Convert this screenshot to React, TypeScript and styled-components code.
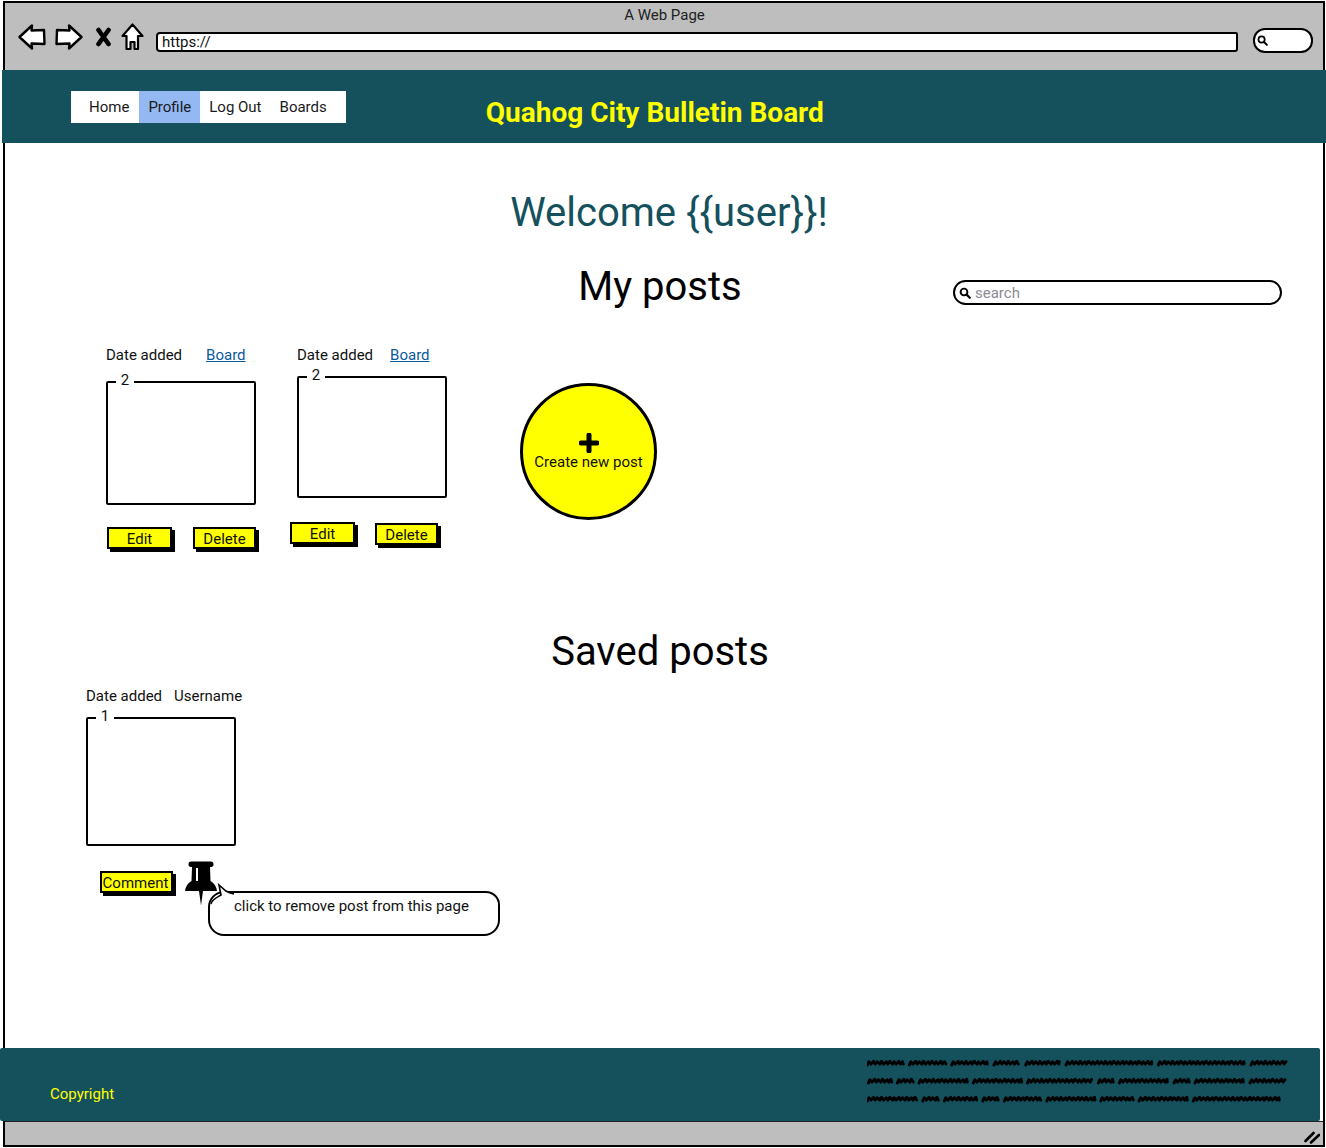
import React from "react";
import styled, { createGlobalStyle } from "styled-components";

const TEAL = "#15505d";
const YELLOW = "#ffff00";
const GREY = "#bebebe";

const Global = createGlobalStyle`
  html, body { margin: 0; padding: 0; background: #fff; }
  body { font-family: Roboto, "Liberation Sans", sans-serif; font-size: 15px; color: #111; }
  * { box-sizing: border-box; }
`;

const Window = styled.div`
  margin: 1px 1px 1px 3px;
  height: 1146px;
  border: 2px solid #000;
  background: #fff;
  display: flex;
  flex-direction: column;
`;

const TitleBar = styled.div`
  height: 67px;
  flex: none;
  background: ${GREY};
  padding-left: 13px;
`;

const WindowTitle = styled.div`
  height: 20px;
  padding: 3px 12px 0 0;
  line-height: 18px;
  font-size: 15px;
  text-align: center;
  color: #222;
`;

const Toolbar = styled.div`
  height: 28px;
  display: flex;
  align-items: center;
`;

const ToolIcon = styled.svg<{ $after: number }>`
  flex: none;
  margin-right: ${(p) => p.$after}px;
  display: block;
`;

const UrlBar = styled.div`
  width: 1082px;
  height: 20px;
  margin-top: 10px;
  border: 2.5px solid #000;
  border-radius: 4px 2px 3px 4px;
  background: #fff;
  padding-left: 4px;
  line-height: 16px;
  font-size: 15px;
  color: #111;
  white-space: nowrap;
`;

const BrowserSearch = styled.div`
  width: 60px;
  height: 25px;
  margin-left: 15px;
  margin-top: 7px;
  border: 2.5px solid #000;
  border-radius: 12px;
  background: #fff;
  padding-left: 2px;
  display: flex;
  align-items: center;
`;

const Header = styled.header`
  height: 73px;
  margin: 0 -3px 0 -3px;
  background: ${TEAL};
  display: flex;
  align-items: flex-start;
  flex: none;
`;

const Nav = styled.nav`
  margin: 21px 0 0 69px;
  height: 32px;
  background: #fff;
  padding: 0 10px 0 9px;
  display: flex;
`;

const NavItem = styled.a<{ $active?: boolean; $extra?: number }>`
  padding: 0 ${(p) => 9 + (p.$extra ?? 0)}px 0 9px;
  line-height: 32px;
  font-size: 15px;
  color: #1a1a1a;
  background: ${(p) => (p.$active ? "#93b8f2" : "transparent")};
`;

const SiteTitle = styled.div`
  margin: 25px 0 0 140px;
  line-height: 36px;
  font-size: 28px;
  font-weight: 700;
  color: ${YELLOW};
  white-space: nowrap;
`;

const Main = styled.main`
  flex: 1;
  padding: 46px 8px 0 0;
`;

const Welcome = styled.h1`
  margin: 0;
  padding-left: 18px;
  text-align: center;
  font-size: 40px;
  line-height: 48px;
  font-weight: 400;
  color: ${TEAL};
`;

const SectionHeading = styled.h2`
  margin: 0;
  text-align: center;
  font-size: 40px;
  line-height: 48px;
  font-weight: 400;
  color: #000;
`;

const MyPostsHeading = styled(SectionHeading)`
  grid-column: 2;
`;

const MyPostsHead = styled.div`
  margin-top: 26px;
  display: grid;
  grid-template-columns: 1fr auto 1fr;
  align-items: center;
`;

const SearchBox = styled.div`
  grid-column: 3;
  justify-self: end;
  width: 329px;
  height: 25px;
  margin-right: 33px;
  margin-top: 11px;
  border: 2px solid #000;
  border-radius: 13px;
  display: flex;
  align-items: center;
  gap: 4px;
  padding-left: 4px;
  color: #8a8a94;
  font-size: 15px;
`;

const PostsRow = styled.div`
  margin: 35px 0 0 101px;
  display: flex;
  align-items: flex-start;
`;

const Card = styled.article<{ $width: number }>`
  width: ${(p) => p.$width}px;
  flex: none;
`;

const Meta = styled.div<{ $gap: number }>`
  display: flex;
  gap: ${(p) => p.$gap}px;
  line-height: 18px;
  font-size: 15px;
  white-space: nowrap;
`;

const BoardLink = styled.a`
  color: #0b5a9c;
  text-decoration: underline;
`;

const NoteBox = styled.div<{ $top: number; $height: number }>`
  position: relative;
  width: 150px;
  height: ${(p) => p.$height}px;
  margin-top: ${(p) => p.$top}px;
  border: 2.5px solid #000;
  border-radius: 2px;
`;

const NoteCount = styled.span`
  position: absolute;
  left: 8px;
  top: -12px;
  width: 18px;
  background: #fff;
  text-align: center;
  line-height: 18px;
  font-size: 15px;
`;

const CardActions = styled.div<{ $top: number; $left: number; $gap: number }>`
  margin-top: ${(p) => p.$top}px;
  margin-left: ${(p) => p.$left}px;
  display: flex;
  align-items: flex-start;
  gap: ${(p) => p.$gap}px;
`;

const ActionButton = styled.button<{ $width: number; $shift?: number }>`
  width: ${(p) => p.$width}px;
  height: 22px;
  margin-top: ${(p) => p.$shift ?? 0}px;
  padding: 1px 0 0;
  border: 2px solid #000;
  background: ${YELLOW};
  box-shadow: 3px 3px 0 #000;
  font-family: inherit;
  font-size: 15px;
  line-height: 18px;
  color: #111;
`;

const CreateCircle = styled.button`
  flex: none;
  width: 137px;
  height: 137px;
  margin-top: 37px;
  padding: 47px 0 0;
  border: 3px solid #000;
  border-radius: 50%;
  background: ${YELLOW};
  display: flex;
  flex-direction: column;
  align-items: center;
  font-family: inherit;
  font-size: 15px;
  line-height: 18px;
  color: #111;
`;

const CreateLabel = styled.span`
  white-space: nowrap;
`;

const SavedHeading = styled(SectionHeading)`
  margin-top: 79px;
`;

const SavedRow = styled.section`
  margin: 11px 0 0 81px;
`;

const SavedActions = styled.div`
  margin-top: 15px;
  display: flex;
  align-items: flex-start;
`;

const CommentButton = styled(ActionButton)`
  margin: 10px 12px 0 14px;
  padding: 1px 2px 0 0;
`;

const Bubble = styled.div`
  position: relative;
  width: 292px;
  height: 45px;
  margin: 30px 0 0 -9px;
  border: 2px solid #000;
  border-radius: 16px 14px 16px 16px;
  background: #fff;
  padding: 4px 0 0 24px;
  line-height: 18px;
  font-size: 15px;
  white-space: nowrap;
`;

const BubbleTail = styled.svg`
  position: absolute;
  left: -2px;
  top: -10px;
`;

const Footer = styled.footer`
  height: 73px;
  flex: none;
  margin: 0 3px 0 -5px;
  background: ${TEAL};
  border-radius: 2px;
  display: flex;
  justify-content: space-between;
  align-items: flex-start;
  padding: 8px 31px 0 50px;
`;

const Copyright = styled.div`
  margin-top: 29px;
  line-height: 18px;
  font-size: 15px;
  color: ${YELLOW};
`;

const StatusBar = styled.div`
  height: 24px;
  flex: none;
  background: ${GREY};
  border-top: 1px solid #222;
  display: flex;
  justify-content: flex-end;
  align-items: flex-end;
  padding: 0 3px 1px 0;
`;

const PlusMark = styled.svg`
  flex: none;
`;

const Back = () => (
  <ToolIcon $after={9} width="28" height="26" viewBox="0 0 28 26">
    <path d="M1.5 13 L14 1.5 L13.5 6.5 L26 6 L26.5 20 L13.5 19.5 L14 24.5 Z" fill="#fff" stroke="#000" strokeWidth="2.4" strokeLinejoin="round" />
  </ToolIcon>
);

const Forward = () => (
  <ToolIcon $after={12} width="28" height="26" viewBox="0 0 28 26">
    <path d="M26.5 13 L14 1.5 L14.5 6.5 L2 6 L1.5 20 L14.5 19.5 L14 24.5 Z" fill="#fff" stroke="#000" strokeWidth="2.4" strokeLinejoin="round" />
  </ToolIcon>
);

const Stop = () => (
  <ToolIcon $after={9} width="17" height="20" viewBox="0 0 17 20">
    <path d="M3.5 3 L13.5 17 M13.5 3 L3.5 17" fill="none" stroke="#000" strokeWidth="4.6" strokeLinecap="round" />
  </ToolIcon>
);

const HomeIcon = () => (
  <ToolIcon $after={12} width="23" height="28" viewBox="0 0 23 28">
    <path d="M11.5 1.5 L21.5 13 L17 13 L17 26 L13.5 26 L13.5 19 L9.5 19 L9.5 26 L5.5 26 L5.5 13 L1.5 13 Z" fill="#fff" stroke="#000" strokeWidth="2.2" strokeLinejoin="round" />
  </ToolIcon>
);

const Magnifier = ({ size }: { size: number }) => (
  <ToolIcon $after={0} width={size} height={size} viewBox="0 0 12 12">
    <circle cx="5" cy="5" r="3.4" fill="none" stroke="#000" strokeWidth="1.9" />
    <path d="M7.6 7.6 L10.8 10.8" stroke="#000" strokeWidth="2.2" strokeLinecap="round" />
  </ToolIcon>
);

const Plus = () => (
  <PlusMark width="20" height="20" viewBox="0 0 20 20">
    <path d="M10 2 V18 M2 10 H18" stroke="#000" strokeWidth="5" strokeLinecap="round" />
  </PlusMark>
);

const Pin = () => (
  <ToolIcon $after={0} width="32" height="45" viewBox="0 0 32 45">
    <path d="M6 0.5 H26 Q28.5 0.5 28.5 3.3 Q28.5 6 26 6 H25 L25.5 20 Q31 23 32 30 H18 L16 44.5 L14 30 H0 Q1 23 6.5 20 L7 6 H6 Q3.5 6 3.5 3.3 Q3.5 0.5 6 0.5 Z" fill="#000" />
    <path d="M12 7 L12 20" stroke="#fff" strokeWidth="2" />
  </ToolIcon>
);

const Tail = () => (
  <BubbleTail width="30" height="26" viewBox="0 0 30 26">
    <path d="M3 21 C4 16 10 14 13 12 L11 2 L18 8 Q21 10 26 11 L26 14 L6 25 Z" fill="#fff" />
    <path d="M3 21 C4 16 10 14 13 12 L11 2 L18 8 Q21 10 26 11" fill="none" stroke="#000" strokeWidth="1.6" />
  </BubbleTail>
);

const SCRIBBLE_LINES: { y: number; words: [number, number][] }[] = [
  { y: 7, words: [[52, 160], [178, 288], [305, 412], [432, 505], [527, 628], [648, 905], [925, 1182], [1203, 1308]] },
  { y: 25, words: [[55, 125], [142, 190], [207, 352], [370, 515], [532, 725], [745, 790], [808, 952], [972, 1018], [1035, 1180], [1200, 1305]] },
  { y: 43, words: [[52, 200], [218, 265], [283, 380], [398, 445], [463, 572], [590, 735], [752, 850], [867, 1012], [1030, 1288]] },
];

const scribblePath = (from: number, to: number, y: number) => {
  const x0 = from / 3 - 17;
  const x1 = to / 3 - 17;
  let d = `M${x0.toFixed(1)} ${y + 2}`;
  let x = x0;
  let i = 0;
  while (x < x1) {
    x = Math.min(x + 1.6 + ((i * 7) % 3) * 0.5, x1);
    const a = i % 2 === 0 ? -1.3 - ((i * 5) % 4) * 0.25 : 1.1;
    d += ` L${x.toFixed(1)} ${(y + a).toFixed(1)}`;
    i += 1;
  }
  return d;
};

const Scribble = () => (
  <svg width="422" height="52" viewBox="0 0 422 52">
    {SCRIBBLE_LINES.flatMap((line) =>
      line.words.map(([a, b]) => (
        <path key={`${line.y}-${a}`} d={scribblePath(a, b, line.y)} fill="none" stroke="#000" strokeWidth="2.9" strokeLinecap="round" strokeLinejoin="round" />
      ))
    )}
  </svg>
);

const Grip = () => (
  <svg width="16" height="14" viewBox="0 0 16 14">
    <path d="M1.5 11 L9.5 3 M7 12.5 L15 5" stroke="#000" strokeWidth="2.6" strokeLinecap="round" />
  </svg>
);

export default function App() {
  return (
    <>
      <Global />
      <Window>
        <TitleBar>
          <WindowTitle>A Web Page</WindowTitle>
          <Toolbar>
            <Back />
            <Forward />
            <Stop />
            <HomeIcon />
            <UrlBar>https://</UrlBar>
            <BrowserSearch>
              <Magnifier size={11} />
            </BrowserSearch>
          </Toolbar>
        </TitleBar>

        <Header>
          <Nav>
            <NavItem $extra={1}>Home</NavItem>
            <NavItem $active>Profile</NavItem>
            <NavItem>Log Out</NavItem>
            <NavItem>Boards</NavItem>
          </Nav>
          <SiteTitle>Quahog City Bulletin Board</SiteTitle>
        </Header>

        <Main>
          <Welcome>Welcome {"{{user}}"}!</Welcome>
          <MyPostsHead>
            <MyPostsHeading>My posts</MyPostsHeading>
            <SearchBox>
              <Magnifier size={12} />
              search
            </SearchBox>
          </MyPostsHead>

          <PostsRow>
            <Card $width={191}>
              <Meta $gap={24}>
                <span>Date added</span>
                <BoardLink href="#">Board</BoardLink>
              </Meta>
              <NoteBox $top={17} $height={124}>
                <NoteCount>2</NoteCount>
              </NoteBox>
              <CardActions $top={22} $left={1} $gap={21}>
                <ActionButton $width={65}>Edit</ActionButton>
                <ActionButton $width={63}>Delete</ActionButton>
              </CardActions>
            </Card>
            <Card $width={223}>
              <Meta $gap={17}>
                <span>Date added</span>
                <BoardLink href="#">Board</BoardLink>
              </Meta>
              <NoteBox $top={12} $height={122}>
                <NoteCount>2</NoteCount>
              </NoteBox>
              <CardActions $top={24} $left={-7} $gap={20}>
                <ActionButton $width={65}>Edit</ActionButton>
                <ActionButton $width={63} $shift={1}>Delete</ActionButton>
              </CardActions>
            </Card>
            <CreateCircle>
              <Plus />
              <CreateLabel>Create new post</CreateLabel>
            </CreateCircle>
          </PostsRow>

          <SavedHeading>Saved posts</SavedHeading>
          <SavedRow>
            <Meta $gap={12}>
              <span>Date added</span>
              <span>Username</span>
            </Meta>
            <NoteBox $top={12} $height={129}>
              <NoteCount>1</NoteCount>
            </NoteBox>
            <SavedActions>
              <CommentButton $width={73}>Comment</CommentButton>
              <Pin />
              <Bubble>
                <Tail />
                click to remove post from this page
              </Bubble>
            </SavedActions>
          </SavedRow>
        </Main>

        <Footer>
          <Copyright>Copyright</Copyright>
          <Scribble />
        </Footer>
        <StatusBar>
          <Grip />
        </StatusBar>
      </Window>
    </>
  );
}
